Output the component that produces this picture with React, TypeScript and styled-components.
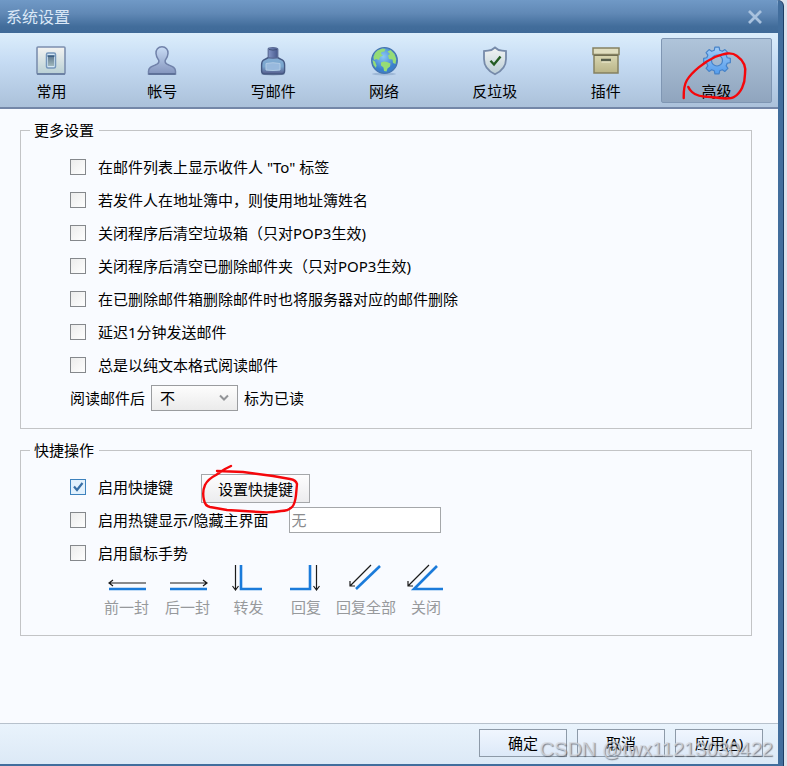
import React from "react";
import styled, { createGlobalStyle } from "styled-components";

const GlobalStyle = createGlobalStyle`
  * { box-sizing: border-box; }
  body {
    margin: 0;
    background: #dbe2ec;
    font-family: "Noto Sans", "Noto Sans CJK SC", sans-serif;
    font-size: 15px;
    line-height: 22px;
    color: #000;
  }
  button, input, select { font: inherit; color: inherit; }
`;

const Dialog = styled.main`
  position: relative;
  display: flex;
  flex-direction: column;
  min-height: 100vh;
  margin-right: 4px;
  background: #f9fbff;
  border: solid #426e9d;
  border-width: 0 5px 2px 0;
  border-top-right-radius: 6px;
  box-shadow: 1px 0 0 #1d3c63;
  overflow: hidden;
`;

const TitleBar = styled.header`
  display: flex;
  align-items: center;
  justify-content: space-between;
  height: 33px;
  margin-right: -5px;
  padding: 0 20px 0 6px;
  background: linear-gradient(#7099c6, #6189b6 40%, #426d9b 80%, #3f6a98);
`;

const Title = styled.h1`
  margin: 0;
  font-size: 16px;
  font-weight: 400;
  line-height: 22px;
  color: #dbe8f7;
`;

const CloseButton = styled.button`
  display: flex;
  padding: 0;
  border: 0;
  background: none;
`;

const Toolbar = styled.nav`
  display: grid;
  grid-template-columns: repeat(7, 1fr);
  height: 76px;
  margin-left: -4px;
  padding: 5px 6px 4px 0;
  border-bottom: 2px solid #7487a8;
  background: linear-gradient(#dceefc, #c5dbf3 40%, #abc1da);
`;

const ToolButton = styled.button<{ $active?: boolean }>`
  position: relative;
  display: flex;
  flex-direction: column;
  align-items: center;
  gap: 3px;
  padding: 6px 0 0;
  border: 1px solid ${(p) => (p.$active ? "#7f96b3" : "transparent")};
  border-radius: 2px;
  background: ${(p) => (p.$active ? "linear-gradient(#afc4da, #90a5be)" : "none")};
`;

const Content = styled.div`
  display: flex;
  flex: 1;
  flex-direction: column;
  gap: 10px;
  padding: 10px 26px 24px 20px;
`;

const Group = styled.fieldset`
  min-width: 0;
  margin: 0;
  padding: 9px 0 14px 49px;
  border: 1px solid #c3c4c6;
`;

const Legend = styled.legend`
  margin-left: -40px;
  padding: 0 5px 0 4px;
`;

const Row = styled.div`
  display: flex;
  align-items: center;
  height: 33px;
`;

const CheckLabel = styled.label`
  display: flex;
  align-items: center;
  gap: 12px;
  white-space: nowrap;
`;

const CheckBox = styled.input`
  appearance: none;
  width: 16px;
  height: 16px;
  margin: 0;
  border: 1px solid #85888c;
  background: linear-gradient(135deg, #ececec, #fefefe);
  &:checked {
    border-color: #3e82bd;
    background: url("data:image/svg+xml,%3Csvg xmlns='http://www.w3.org/2000/svg' viewBox='0 0 14 14'%3E%3Cpath d='M3 6.5l3 3.5 5.5-7' fill='none' stroke='%23386fa6' stroke-width='2.2'/%3E%3C/svg%3E") #e2f1fd;
  }
`;

const SelectRow = styled(Row)`
  gap: 6px;
`;

const Select = styled.select`
  appearance: none;
  width: 87px;
  height: 26px;
  padding: 0 8px;
  border: 1px solid #9a9c9f;
  border-radius: 0;
  background:
    url("data:image/svg+xml,%3Csvg xmlns='http://www.w3.org/2000/svg' width='10' height='8'%3E%3Cpath d='M1 1.5l4 4 4-4' fill='none' stroke='%23929497' stroke-width='2'/%3E%3C/svg%3E") no-repeat right 8px center,
    linear-gradient(#fdfdfd, #ebebeb);
`;

const PushButton = styled.button`
  position: relative;
  align-self: flex-end;
  width: 109px;
  height: 29px;
  margin-left: 28px;
  padding: 0;
  border: 1px solid #a5a7aa;
  background: linear-gradient(#fdfdfe, #ececee);
`;

const HotkeyInput = styled.input`
  width: 152px;
  height: 26px;
  margin-left: 20px;
  padding: 0 2px;
  border: 1px solid #a5a7aa;
  background: #fff;
  &::placeholder { color: #8a8b8d; opacity: 1; }
`;

const Gestures = styled.ul`
  display: grid;
  grid-template-columns: repeat(3, 61px) 54px 66px 54px;
  margin: 0 0 3px 26px;
  padding: 0;
  list-style: none;
`;

const Gesture = styled.li`
  display: flex;
  flex-direction: column;
  align-items: center;
  gap: 4px;
  margin-top: -5px;
  color: #97999c;
  white-space: nowrap;
`;

const Footer = styled.footer`
  display: flex;
  justify-content: flex-end;
  gap: 10px;
  height: 41px;
  padding: 5px 15px 0;
  border-top: 1px solid #b7c1cc;
  background: linear-gradient(#e9f3fc, #dce9f6);
`;

const FooterButton = styled.button`
  width: 88px;
  height: 28px;
  padding: 0;
  border: 1px solid #8d9aa8;
  background: linear-gradient(#f0f6fe, #dce9f8);
`;

const Ink = styled.svg`
  position: absolute;
  top: -1px;
  left: -1px;
  overflow: visible;
  pointer-events: none;
  fill: none;
  stroke: #f5070b;
  stroke-width: 2.4;
  stroke-linecap: round;
  stroke-linejoin: round;
`;

const Watermark = styled.span`
  position: absolute;
  right: 5px;
  bottom: 3px;
  font-family: "Liberation Sans", Arial, sans-serif;
  font-size: 20px;
  line-height: 24px;
  color: rgba(214, 217, 223, 0.75);
  text-shadow: 1px 1px 1px rgba(70, 75, 85, 0.65);
  pointer-events: none;
`;

const SwitchIcon = () => (
  <svg width="32" height="32" viewBox="0 0 32 32">
    <defs>
      <linearGradient id="plate" x2="0" y2="1"><stop stopColor="#f3f3f2" /><stop offset="1" stopColor="#b9d0d5" /></linearGradient>
      <linearGradient id="knob" x2="0" y2="1"><stop stopColor="#5e7890" /><stop offset="1" stopColor="#9fb7bb" /></linearGradient>
    </defs>
    <rect x="2" y="2" width="28" height="27" rx="1" fill="url(#plate)" stroke="#7c8faf" strokeWidth="1.6" />
    <path d="M2 29h28" stroke="#62789c" strokeWidth="1.5" />
    <rect x="11.5" y="8" width="9" height="15" rx="1.5" fill="#d4e7f5" stroke="#7596bb" strokeWidth="1.5" />
    <rect x="13" y="11" width="6" height="10" fill="url(#knob)" />
    <path d="M12.5 11h7" stroke="#31567c" strokeWidth="1.5" />
  </svg>
);

const PersonIcon = () => (
  <svg width="32" height="32" viewBox="0 0 32 32">
    <defs><linearGradient id="person" x2="0" y2="1"><stop stopColor="#c9dcf5" /><stop offset="1" stopColor="#8394bd" /></linearGradient></defs>
    <path d="M16 1.8c-4 0-6.2 3-6 6.7.2 3.4 1.7 5 2.8 6.8.5 2.4-.6 3.5-3.1 4.5-4 1.6-7.2 2.6-7.2 6.5V29h27v-2.7c0-3.9-3.2-4.9-7.2-6.5-2.5-1-3.6-2.1-3.1-4.5 1.1-1.8 2.6-3.4 2.8-6.8.2-3.7-2-6.7-6-6.7z" fill="url(#person)" stroke="#7182aa" strokeWidth="1.5" />
    <path d="M2.5 29h27" stroke="#566890" strokeWidth="1.5" />
  </svg>
);

const InkIcon = () => (
  <svg width="32" height="32" viewBox="0 0 32 32">
    <defs>
      <linearGradient id="bottle" x2="0" y2="1"><stop stopColor="#84add4" /><stop offset=".55" stopColor="#78a5ce" /><stop offset="1" stopColor="#565c8c" /></linearGradient>
      <linearGradient id="cap"><stop stopColor="#8294c5" /><stop offset="1" stopColor="#46598d" /></linearGradient>
    </defs>
    <ellipse cx="16" cy="29" rx="12" ry="1.5" fill="#64799a" opacity=".5" />
    <path d="M11.5 12.5l-5 2.5C5 16 4.600 18 4.600 20v6c0 2 1 3 3 3h17c2 0 3-1 3-3v-6c0-2-.5-4-2.100-5l-5-2.500z" fill="url(#bottle)" stroke="#455983" strokeWidth="1.4" />
    <path d="M11.200 4c0-1.800 9.600-1.800 9.600 0v8c0 1.500-9.600 1.500-9.600 0z" fill="url(#cap)" stroke="#5a6a94" strokeWidth="1.2" />
    <path d="M12 4.500q4 1.200 8 0" fill="none" stroke="#40507a" />
    <path d="M9 18.500q7-1.500 14 0v6.500q-7 1-14 0z" fill="#98b9dd" stroke="#b0cbe5" />
  </svg>
);

const GlobeIcon = () => (
  <svg width="32" height="32" viewBox="0 0 32 32">
    <defs><radialGradient id="sea" cx=".45" cy=".35"><stop stopColor="#8cc8f5" /><stop offset="1" stopColor="#3b80cc" /></radialGradient></defs>
    <ellipse cx="16" cy="29" rx="12" ry="1.5" fill="#6c8db5" opacity=".4" />
    <circle cx="16.500" cy="15.500" r="12.800" fill="url(#sea)" stroke="#4776b0" strokeWidth="1.3" />
    <path d="M9.500 5.500l5-2 3 .5-1 2.500-3 .5-.5 2 2 1.500-3 1.500-1 3-2.500-1-2.500 1-.5-3L7 8z" fill="#96dc75" />
    <path d="M19.500 6.500l3-1.500 4 4 1.800 5-.8 5-2.500-1-.5-3.500-3.500-.5-1-3.500 2-1.500z" fill="#96dc75" />
    <path d="M13 17.500l3-1 3 .5 3.500 1.500-.5 3-2.500 2-1 3-2.500-.5-.5-3.500-2.500-2z" fill="#96dc75" />
    <path d="M4.500 15l2.500 1.500 1.500 4-.5 2.500-2.500-3z" fill="#96dc75" />
  </svg>
);

const ShieldIcon = () => (
  <svg width="32" height="32" viewBox="0 0 32 32">
    <defs><linearGradient id="shield" x2="0" y2="1"><stop stopColor="#f3f5f4" /><stop offset="1" stopColor="#bacdd5" /></linearGradient></defs>
    <path d="M16 2.5c-2 2-4.5 3-7 3.200L5 6v8c0 7 5 12.500 11 15.300C22 26.500 27 21 27 14V6l-4-.3c-2.500-.2-5-1.200-7-3.200z" fill="url(#shield)" stroke="#768aa9" strokeWidth="1.8" />
    <path d="M11.5 15.800l3.500 3.700 6.500-8" fill="none" stroke="#245c22" strokeWidth="2.4" />
  </svg>
);

const BoxIcon = () => (
  <svg width="32" height="32" viewBox="0 0 32 32">
    <defs><linearGradient id="box" x2="0" y2="1"><stop stopColor="#dbd9b5" /><stop offset="1" stopColor="#b9b487" /></linearGradient></defs>
    <rect x="4" y="9" width="24" height="19" fill="url(#box)" stroke="#858161" strokeWidth="1.5" />
    <rect x="3" y="3" width="26" height="6.5" fill="#e0dec0" stroke="#858161" strokeWidth="1.5" />
    <path d="M4 10.5h24" stroke="#716e52" />
    <path d="M11 15h10" stroke="#555d4b" strokeWidth="2.5" />
    <path d="M11.5 17h9" stroke="#efedd3" />
  </svg>
);

const gearPath = Array.from({ length: 8 }, (_, i) => {
  const point = (radius: number, degrees: number) => {
    const angle = ((i * 45 + degrees - 90) * Math.PI) / 180;
    return `${16 + radius * Math.cos(angle)} ${15.5 + radius * Math.sin(angle)}`;
  };
  return `${i ? "L" : "M"}${point(10.6, -15)}L${point(13.5, -9)}L${point(13.5, 9)}L${point(10.6, 15)}`;
}).join("") + "Z";

const GearIcon = () => (
  <svg width="32" height="32" viewBox="0 0 32 32">
    <defs><linearGradient id="gear" x2="0" y2="1"><stop stopColor="#a0cbf7" /><stop offset="1" stopColor="#559ded" /></linearGradient></defs>
    <path d={`${gearPath} M21.5 15.5a5.5 5.5 0 1 0-11 0a5.5 5.5 0 1 0 11 0Z`} fill="url(#gear)" fillRule="evenodd" stroke="#4682c8" strokeWidth="1.2" strokeLinejoin="round" />
  </svg>
);

const tools = [
  { label: "常用", Icon: SwitchIcon },
  { label: "帐号", Icon: PersonIcon },
  { label: "写邮件", Icon: InkIcon },
  { label: "网络", Icon: GlobeIcon },
  { label: "反垃圾", Icon: ShieldIcon },
  { label: "插件", Icon: BoxIcon },
  { label: "高级", Icon: GearIcon, active: true },
];

const options = [
  '在邮件列表上显示收件人 "To" 标签',
  "若发件人在地址簿中，则使用地址簿姓名",
  "关闭程序后清空垃圾箱（只对POP3生效)",
  "关闭程序后清空已删除邮件夹（只对POP3生效)",
  "在已删除邮件箱删除邮件时也将服务器对应的邮件删除",
  "延迟1分钟发送邮件",
  "总是以纯文本格式阅读邮件",
];

const gestures = [
  { label: "前一封", arrow: "M39 19H2m4-3l-4 3 4 3", stroke: "M2 25H39" },
  { label: "后一封", arrow: "M2 19H39m-4-3l4 3-4 3", stroke: "M2 25H39" },
  { label: "转发", arrow: "M6.5 1v25m-3-4l3 4 3-4", stroke: "M12 1v24h21" },
  { label: "回复", arrow: "M30.5 1v25m-3-4l3 4 3-4", stroke: "M24 1v24H4" },
  { label: "回复全部", arrow: "M25 1L4 22m0-5v5h5", stroke: "M34 2L10 25" },
  { label: "关闭", arrow: "M23 1L2 22m0-5v5h5", stroke: "M31 2L8 25H37" },
];

const Check = ({ label, checked }: { label: string; checked?: boolean }) => (
  <CheckLabel>
    <CheckBox type="checkbox" defaultChecked={checked} />
    {label}
  </CheckLabel>
);

export default function App() {
  return (
    <>
      <GlobalStyle />
      <Dialog>
        <TitleBar>
          <Title>系统设置</Title>
          <CloseButton type="button" aria-label="关闭">
            <svg width="16" height="16" viewBox="0 0 16 16">
              <path d="M2 2l12 12M14 2L2 14" stroke="#a9c2de" strokeWidth="2.8" />
            </svg>
          </CloseButton>
        </TitleBar>
        <Toolbar>
          {tools.map(({ label, Icon, active }) => (
            <ToolButton key={label} type="button" $active={active}>
              <Icon />
              {label}
              {active && (
                <Ink width="110" height="65">
                  <path d="M22.7 60C22.5 52 23 47 26 42C31 34 43 24 54 19C62 16 70 13 76 18C83 23 85 30 84 36C84 46 80 55 73 59C68 62 57 60 50 59C42 59 35 58 31 54Q28 51 27.3 49" />
                </Ink>
              )}
            </ToolButton>
          ))}
        </Toolbar>
        <Content>
          <Group>
            <Legend>更多设置</Legend>
            {options.map((label) => (
              <Row key={label}><Check label={label} /></Row>
            ))}
            <SelectRow>
              <label htmlFor="read">阅读邮件后</label>
              <Select id="read"><option>不</option></Select>
              <span>标为已读</span>
            </SelectRow>
          </Group>
          <Group>
            <Legend>快捷操作</Legend>
            <Row>
              <Check label="启用快捷键" checked />
              <PushButton type="button">
                设置快捷键
                <Ink width="109" height="29">
                  <path d="M16 -3L42 -2L72 2L89 5Q95 6 96 10L95 21Q94 30 91 33Q87 37 80 37Q70 39 58 38L26 36L9 33Q4 32 3 26Q1 18 4 11Q7 5 15 1L24 -5L30 -8" />
                </Ink>
              </PushButton>
            </Row>
            <Row>
              <Check label="启用热键显示/隐藏主界面" />
              <HotkeyInput aria-label="热键" placeholder="无" />
            </Row>
            <Row><Check label="启用鼠标手势" /></Row>
            <Gestures>
              {gestures.map(({ label, arrow, stroke }) => (
                <Gesture key={label}>
                  <svg width="40" height="28" viewBox="0 0 40 28" fill="none">
                    <path d={stroke} stroke="#1b7bda" strokeWidth="2.6" />
                    <path d={arrow} stroke="#1b1b1b" strokeWidth="1.2" />
                  </svg>
                  {label}
                </Gesture>
              ))}
            </Gestures>
          </Group>
        </Content>
        <Footer>
          <FooterButton type="button">确定</FooterButton>
          <FooterButton type="button">取消</FooterButton>
          <FooterButton type="button">应用(<u>A</u>)</FooterButton>
        </Footer>
        <Watermark>CSDN @twx11213030422</Watermark>
      </Dialog>
    </>
  );
}
